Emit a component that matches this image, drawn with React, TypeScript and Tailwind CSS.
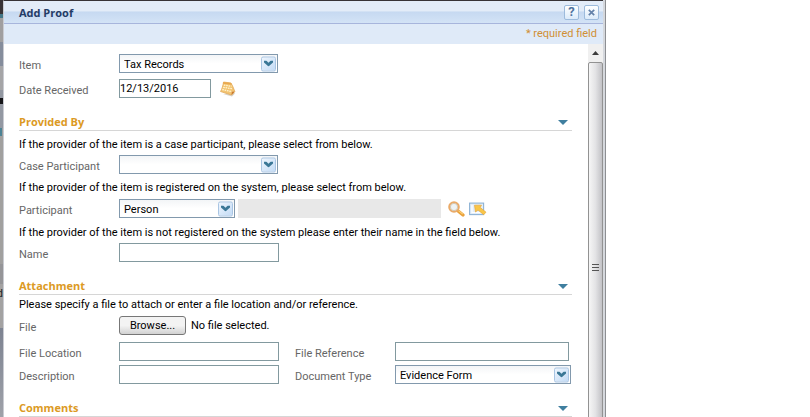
import React, { useRef } from 'react';

function Chevron() {
  return (
    <span className="pointer-events-none absolute right-0.5 top-1/2 flex h-[15px] w-[15px] -translate-y-1/2 items-center justify-center rounded-[2px] border border-[#a9c5e3] bg-linear-to-br from-[#eef5fd] to-[#c3dbf5]">
      <svg width="9" height="6" viewBox="0 0 9 6" aria-hidden="true">
        <path d="M0 0h2.2L4.5 2.2 6.8 0H9v2L4.5 6 0 2z" fill="#3a7796" />
      </svg>
    </span>
  );
}

type SelectProps = { id: string; options: string[]; width: string };

function Select({ id, options, width }: SelectProps) {
  return (
    <div className={`relative h-[19px] ${width}`}>
      <select
        id={id}
        className="block h-[19px] w-full appearance-none border border-[#8299ad] bg-linear-to-b from-[#f3f5f7] to-white to-50% pt-0.5 pl-1 pr-5 text-[11px] leading-4 text-black outline-none"
      >
        {options.map((o) => (
          <option key={o}>{o}</option>
        ))}
      </select>
      <Chevron />
    </div>
  );
}

function TextBox({ id, width, value }: { id: string; width: string; value?: string }) {
  return (
    <input
      id={id}
      type="text"
      defaultValue={value}
      className={`block h-[19px] border border-[#82999f] bg-white p-0 text-[11px] leading-4 text-black outline-none ${width}`}
    />
  );
}

function Label({ htmlFor, children }: { htmlFor: string; children: React.ReactNode }) {
  return (
    <label htmlFor={htmlFor} className="h-[19px] w-[100px] shrink-0 pt-1 leading-4 text-[#666]">
      {children}
    </label>
  );
}

function Hint({ children }: { children: React.ReactNode }) {
  return <p className="h-6 pt-1 leading-5">{children}</p>;
}

function Heading({ children }: { children: React.ReactNode }) {
  return (
    <div className="mt-3.5 flex h-[19px] items-center justify-between border-b border-[#d6d6d6] pt-0.5 pr-1">
      <h2 className="font-['Open_Sans','Noto_Sans',sans-serif] font-bold leading-4 text-[#dc9a24]">{children}</h2>
      <button type="button" aria-label="Collapse section">
        <svg width="10" height="5" viewBox="0 0 10 5" aria-hidden="true">
          <path d="M0 0h10L5 5z" fill="#3f7f9f" />
        </svg>
      </button>
    </div>
  );
}

function CalendarIcon() {
  return (
    <svg width="17" height="16" viewBox="0 0 17 16" aria-hidden="true">
      <path d="M4 13l9 2.500 3-3-2-1z" fill="#d8d2c8" />
      <path d="M4.500 1L12 2c1.500 2.500 2.800 5.500 3.800 8.500L12.500 14 1.500 10.500C3 8 4 4.500 4.500 1z" fill="#f3c472" stroke="#e2ab5c" strokeWidth=".8" />
      <path d="M4.500 1L12 2l1 1.800L4 2.800z" fill="#e9a94f" />
      <path d="M4.800 4.200l7.700 1M4.200 6.300l9.200 1.500M3.300 8.500l10.200 2.300" stroke="#fff5d2" strokeWidth="1.300" strokeDasharray="1.600 .8" />
      <path d="M12.500 14l.3-3.500 3 .2z" fill="#c97a2e" />
    </svg>
  );
}

function SearchIcon() {
  return (
    <svg width="18" height="16" viewBox="0 0 18 16" aria-hidden="true">
      <path d="M10.500 9.500l5.500 4.500" stroke="#e9a13b" strokeWidth="3.200" strokeLinecap="round" />
      <path d="M11.500 9.600l4.300 3.600" stroke="#fbd27c" strokeWidth="1.100" />
      <circle cx="7" cy="6" r="4.800" fill="#eef3f5" stroke="#eaaa68" strokeWidth="2" />
      <circle cx="7" cy="6" r="3.600" fill="none" stroke="#c9bda8" strokeWidth=".7" />
    </svg>
  );
}

function PopupIcon() {
  return (
    <svg width="18" height="14" viewBox="0 0 18 14" aria-hidden="true">
      <rect x=".6" y="1.100" width="14" height="11.500" fill="#e3eef9" stroke="#8db2d5" strokeWidth="1.100" />
      <path d="M3 3v7.500h9" fill="none" stroke="#fff" strokeWidth="1.200" />
      <path d="M5.500 3.200h7l-1.300 2.300L17 10.200l-2.300 2.500-5.700-4.700-2.500 2z" fill="#f9c648" stroke="#e5a63c" strokeWidth=".7" />
    </svg>
  );
}

function TitleButton({ label, children }: { label: string; children: React.ReactNode }) {
  return (
    <button
      type="button"
      aria-label={label}
      className="flex h-[15px] w-[15px] items-center justify-center rounded-[2px] border border-[#9dbbdc] bg-linear-to-b from-white to-[#dcebfa] text-[13px] leading-3 font-bold text-[#52749f]"
    >
      {children}
    </button>
  );
}

function Backdrop() {
  return (
    <div aria-hidden="true" className="flex w-[3px] shrink-0 flex-col overflow-hidden bg-[#a1a09f] text-[11px] leading-3 text-[#222]">
      <div className="h-3.5 shrink-0 bg-[#383336]" />
      <div className="h-1 shrink-0 bg-[#437788]" />
      <div className="h-6 shrink-0 bg-[#a09fa0]" />
      <div className="h-6 shrink-0 bg-[#858d9c]" />
      <div className="h-6 shrink-0 bg-[#a5a5a7]" />
      <div className="h-2 shrink-0 bg-[#9297a1]" />
      <div className="h-1.5 shrink-0 bg-[#151518]" />
      <div className="h-6 shrink-0 bg-[#9398a2]" />
      <div className="h-2 w-0.5 shrink-0 bg-[#4d8395]" />
      <div className="h-32 shrink-0 bg-[#a1a09f]" />
      <div className="h-5 shrink-0 bg-[#959598]" />
      <div className="flex h-5 shrink-0 items-center justify-end bg-[#a3a2a2]">
        <span>d</span>
      </div>
      <div className="h-6 shrink-0 bg-[#a3a2a2]" />
      <div className="flex-1 bg-linear-to-b from-[#7d8391] to-[#9fa2a9]" />
    </div>
  );
}

function Scrollbar() {
  return (
    <div className="flex w-[15px] shrink-0 flex-col overflow-hidden bg-[#f0f0f0]">
      <button type="button" aria-label="Scroll up" className="flex h-[18px] shrink-0 items-center justify-center">
        <svg width="7" height="4" viewBox="0 0 7 4" aria-hidden="true">
          <path d="M3.500 0L7 4H0z" fill="#3c3c3c" />
        </svg>
      </button>
      <div className="flex h-[411px] shrink-0 flex-col items-center justify-center gap-0.5 rounded-t-[2px] border border-[#929292] bg-linear-to-r from-[#f6f6f6] via-[#e3e3e5] to-[#c2c2c6]">
        <span className="h-px w-[7px] bg-[#555]" />
        <span className="h-px w-[7px] bg-[#555]" />
        <span className="h-px w-[7px] bg-[#555]" />
      </div>
    </div>
  );
}

export default function App() {
  const fileRef = useRef<HTMLInputElement>(null);
  return (
    <div className="flex h-screen overflow-hidden bg-white font-[Roboto,'Noto_Sans',sans-serif] text-[11px] leading-4 text-black">
      <div className="flex w-full max-w-[606px]">
        <Backdrop />
        <section className="flex min-w-0 flex-1 flex-col overflow-hidden border-t border-l border-t-[#383336] border-l-[#c9cbd2]">
          <header className="flex h-[23px] shrink-0 items-center justify-between border-b border-[#a7b5dc] bg-linear-to-b from-[#e3ecf8] from-45% via-[#c6d9f1] via-50% to-[#d3e3f6] pl-[15px] pr-1">
            <h1 className="pt-0.5 font-['Open_Sans','Noto_Sans',sans-serif] font-bold text-[#233b66]">Add Proof</h1>
            <div className="flex gap-[5px]">
              <TitleButton label="Help">?</TitleButton>
              <TitleButton label="Close">
                <svg width="7" height="7" viewBox="0 0 7 7" aria-hidden="true">
                  <path d="M.8.8l5.400 5.400M6.200.8L.8 6.200" stroke="#6482aa" strokeWidth="1.700" />
                </svg>
              </TitleButton>
            </div>
          </header>
          <p className="h-5 shrink-0 bg-[#dfeaf8] pr-1.5 text-right leading-5 text-[#d08f35]">* required field</p>

          <div className="flex min-h-0 flex-1">
            <form className="min-w-0 flex-1 overflow-hidden pl-[15px] pr-4 pt-2.5">
              <div className="flex">
                <Label htmlFor="item">Item</Label>
                <Select id="item" width="w-[159px]" options={['Tax Records']} />
              </div>
              <div className="mt-1.5 flex">
                <Label htmlFor="date">Date Received</Label>
                <TextBox id="date" width="w-[92px]" value="12/13/2016" />
                <button type="button" aria-label="Pick a date" className="ml-2">
                  <CalendarIcon />
                </button>
              </div>

              <Heading>Provided By</Heading>
              <Hint>If the provider of the item is a case participant, please select from below.</Hint>
              <div className="flex">
                <Label htmlFor="case">Case Participant</Label>
                <Select id="case" width="w-[159px]" options={['']} />
              </div>
              <Hint>If the provider of the item is registered on the system, please select from below.</Hint>
              <div className="flex h-[21px] items-center">
                <Label htmlFor="participant">Participant</Label>
                <Select id="participant" width="w-[116px]" options={['Person']} />
                <output className="ml-[3px] block h-[19px] w-[203px] bg-[#e8e8e8]" />
                <button type="button" aria-label="Search" className="ml-1.5">
                  <SearchIcon />
                </button>
                <button type="button" aria-label="Open in window" className="ml-1">
                  <PopupIcon />
                </button>
              </div>
              <Hint>
                If the provider of the item is not registered on the system please enter their name in the field below.
              </Hint>
              <div className="flex">
                <Label htmlFor="name">Name</Label>
                <TextBox id="name" width="w-40" />
              </div>

              <Heading>Attachment</Heading>
              <p className="h-[21px] leading-5">Please specify a file to attach or enter a file location and/or reference.</p>
              <div className="flex h-5">
                <Label htmlFor="file">File</Label>
                <input ref={fileRef} id="file" type="file" className="hidden" />
                <button
                  type="button"
                  onClick={() => fileRef.current?.click()}
                  className="h-[19px] w-[67px] rounded-[3px] border border-[#777] bg-linear-to-b from-[#f3f3f3] from-50% to-[#d2d2d2] leading-4"
                >
                  Browse...
                </button>
                <span className="ml-[5px] leading-5">No file selected.</span>
              </div>
              <div className="mt-1.5 flex">
                <Label htmlFor="location">File Location</Label>
                <TextBox id="location" width="w-40" />
                <div className="w-4" />
                <Label htmlFor="reference">File Reference</Label>
                <TextBox id="reference" width="w-[174px]" />
              </div>
              <div className="mt-1 flex">
                <Label htmlFor="description">Description</Label>
                <TextBox id="description" width="w-40" />
                <div className="w-4" />
                <Label htmlFor="type">Document Type</Label>
                <Select id="type" width="w-44" options={['Evidence Form']} />
              </div>

              <Heading>Comments</Heading>
            </form>
            <Scrollbar />
          </div>
        </section>
        <div aria-hidden="true" className="flex w-[3px] shrink-0 flex-col bg-[#d5d8dd]">
          <div className="h-full border-r border-[#8d8f93]" />
        </div>
      </div>
    </div>
  );
}
